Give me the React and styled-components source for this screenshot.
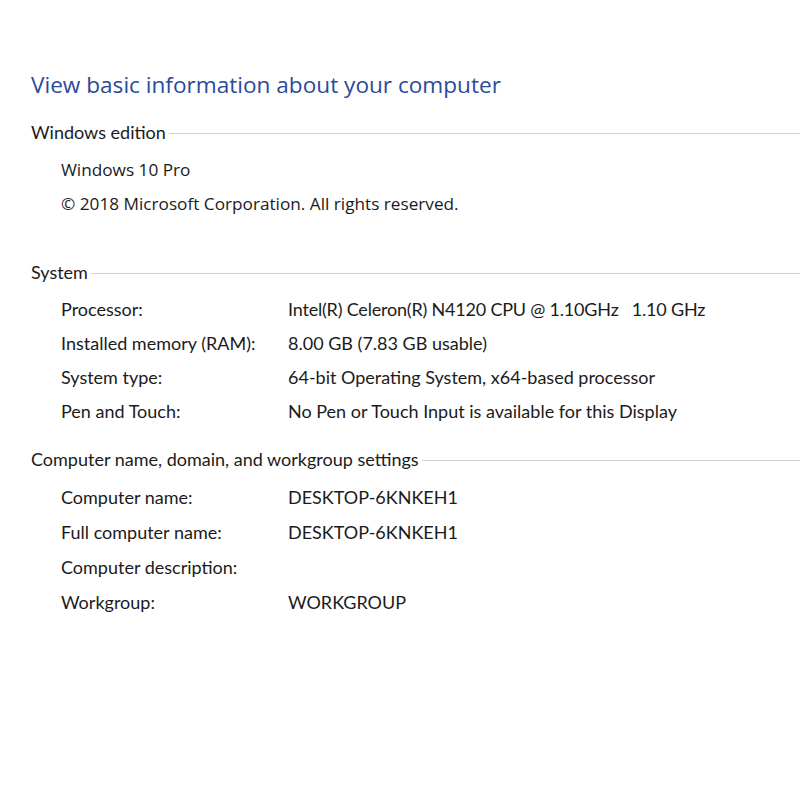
import React from 'react';
import styled, { createGlobalStyle } from 'styled-components';

const GlobalStyle = createGlobalStyle`
    body {
        margin: 0;
        background: #ffffff;
        font-family: Lato, "Noto Sans", sans-serif;
        color: #1b1b1b;
    }
`;

const Page = styled.div`
    width: 800px;
    height: 800px;
    padding: 70px 0 0 31px;
    box-sizing: border-box;
    overflow: hidden;
`;

const Title = styled.h1`
    margin: 0 0 20px;
    font-family: "Open Sans", "Noto Sans", sans-serif;
    font-weight: 400;
    font-size: 22.6px;
    line-height: 30px;
    color: #2a4b9b;
`;

const Section = styled.section`
    margin-top: ${(p) => p.gap || 0}px;
`;

const Header = styled.div`
    display: flex;
    align-items: center;
    height: 24px;
    font-size: 18px;
    margin-bottom: 8px;
`;

const HeaderLine = styled.div`
    flex: 1;
    height: 1px;
    margin-left: 3px;
    margin-top: 3px;
    background: #d0d0d0;
`;

const Rows = styled.div`
    display: grid;
    grid-template-columns: 227px auto;
    grid-auto-rows: ${(p) => p.rowHeight || 34}px;
    align-items: center;
    padding-left: 30px;
    font-size: 18px;
`;

const Label = styled.div``;
const Value = styled.div`
    white-space: pre;
    letter-spacing: ${(p) => p.tight ? '-0.2px' : '0'};
`;

const Line = styled.div`
    grid-column: 1 / -1;
    font-family: "Open Sans", "Noto Sans", sans-serif;
    font-size: 17.2px;
`;

const SectionHeader = ({ children }) => (
    <Header>
        <span>{children}</span>
        <HeaderLine />
    </Header>
);

const App = () => {
    return (
        <Page>
            <GlobalStyle />
            <Title>View basic information about your computer</Title>

            <Section>
                <SectionHeader>Windows edition</SectionHeader>
                <Rows>
                    <Line>Windows 10 Pro</Line>
                    <Line>© 2018 Microsoft Corporation. All rights reserved.</Line>
                </Rows>
            </Section>

            <Section gap={40}>
                <SectionHeader>System</SectionHeader>
                <Rows>
                    <Label>Processor:</Label>
                    <Value tight>Intel(R) Celeron(R) N4120 CPU @ 1.10GHz   1.10 GHz</Value>
                    <Label>Installed memory (RAM):</Label>
                    <Value>8.00 GB (7.83 GB usable)</Value>
                    <Label>System type:</Label>
                    <Value>64-bit Operating System, x64-based processor</Value>
                    <Label>Pen and Touch:</Label>
                    <Value>No Pen or Touch Input is available for this Display</Value>
                </Rows>
            </Section>

            <Section gap={19}>
                <SectionHeader>Computer name, domain, and workgroup settings</SectionHeader>
                <Rows rowHeight={35}>
                    <Label>Computer name:</Label>
                    <Value>DESKTOP-6KNKEH1</Value>
                    <Label>Full computer name:</Label>
                    <Value>DESKTOP-6KNKEH1</Value>
                    <Label>Computer description:</Label>
                    <Value></Value>
                    <Label>Workgroup:</Label>
                    <Value>WORKGROUP</Value>
                </Rows>
            </Section>
        </Page>
    );
};

export default App;
